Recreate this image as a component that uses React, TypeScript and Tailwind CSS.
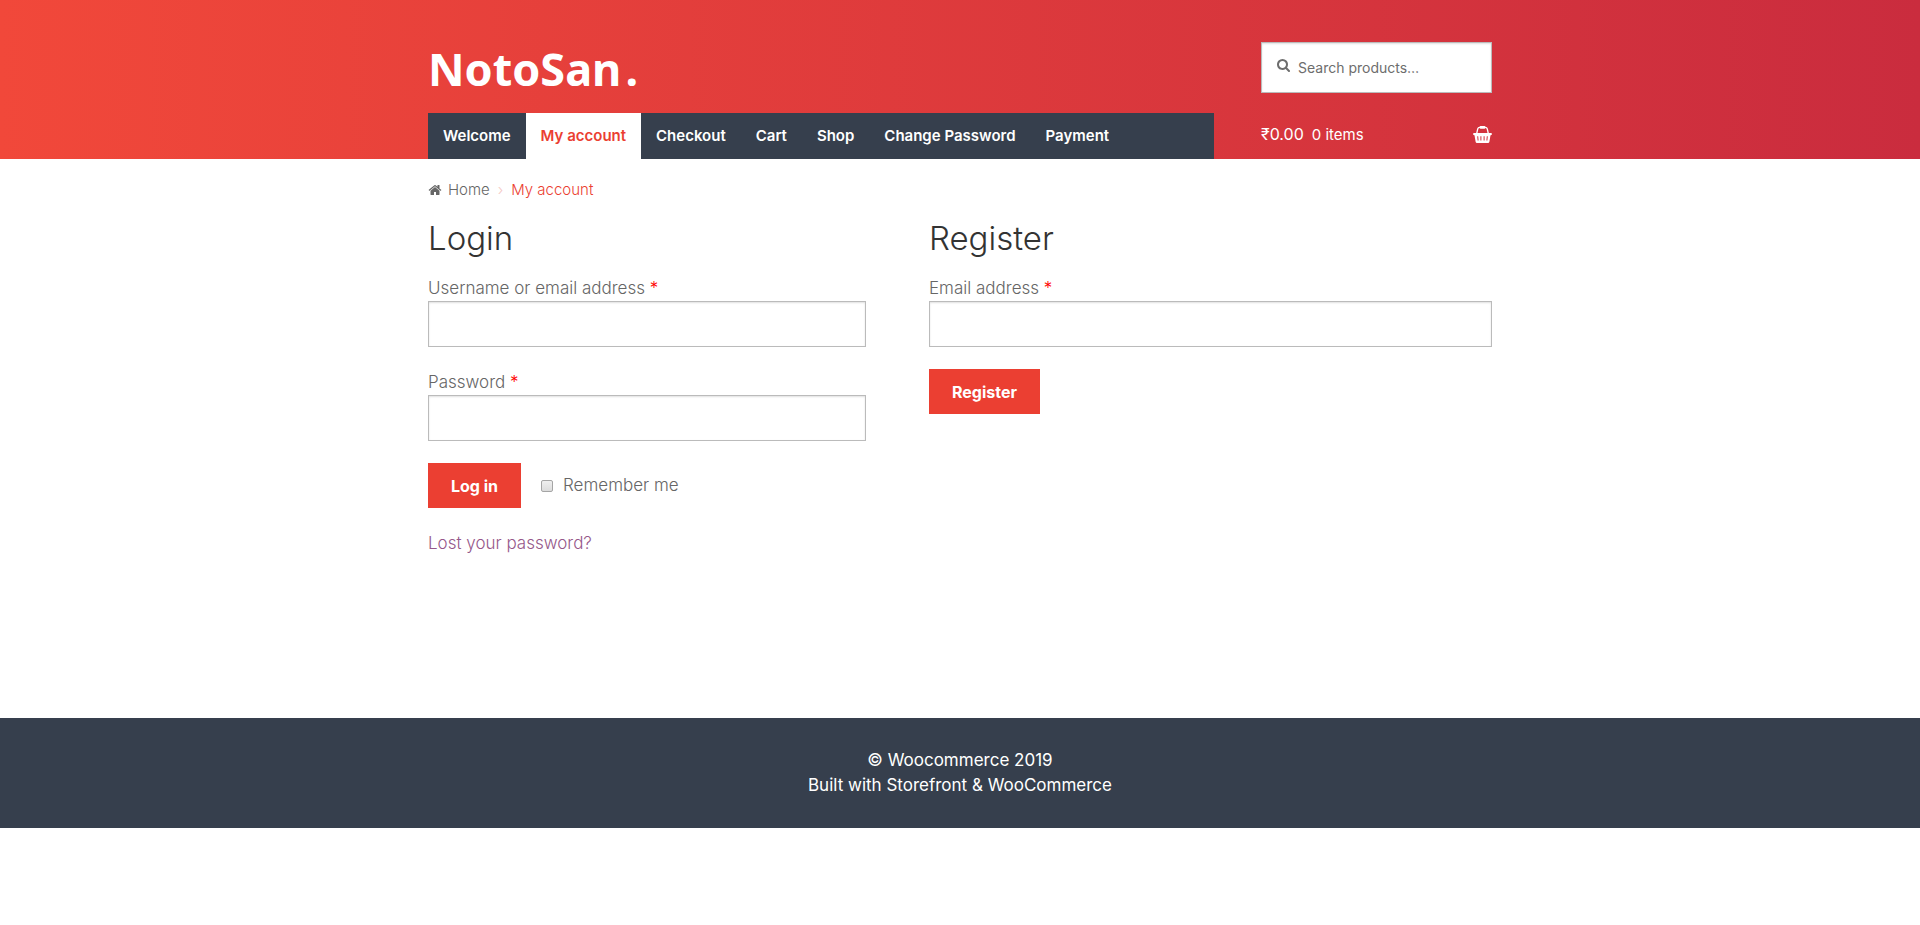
import React from "react";

const NAV = ["Welcome", "My account", "Checkout", "Cart", "Shop", "Change Password", "Payment"];

const INPUT =
  "block h-[46px] w-full border border-[#bbb] bg-white px-3 text-base text-[#43454b] shadow-[inset_0_1px_2px_rgba(0,0,0,0.125)] outline-none";
const BUTTON = "h-[45px] bg-[#eb3f32] px-[23px] text-base font-bold text-white";
const LABEL = "block leading-[26px]";
const HEADING = "mb-[17px] text-[33px] font-light leading-10 text-[#333]";

function HomeIcon() {
  return (
    <svg viewBox="0 0 1792 1792" fill="currentColor" aria-hidden="true" className="mr-[6px] size-[14px]">
      <path d="M1472 992v480q0 26-19 45t-45 19h-384v-384h-256v384h-384q-26 0-45-19t-19-45v-480q0-1 .5-3t.5-3l575-474 575 474q1 2 1 6zm223-69l-62 74q-8 9-21 11h-3q-13 0-21-7l-692-577-692 577q-12 8-24 7-13-2-21-11l-62-74q-8-10-7-23.5t11-21.5l719-599q32-26 76-26t76 26l244 204v-195q0-14 9-23t23-9h192q14 0 23 9t9 23v408l219 182q10 8 11 21.5t-7 23.5z" />
    </svg>
  );
}

function SearchIcon() {
  return (
    <svg viewBox="64 128 1664 1664" fill="currentColor" aria-hidden="true" className="mb-1 size-[13px] shrink-0 text-[#6d6d6d]">
      <path d="M1216 832q0-185-131.5-316.5t-316.5-131.5-316.5 131.5-131.5 316.5 131.5 316.5 316.5 131.5 316.5-131.5 131.5-316.5zm512 832q0 52-38 90t-90 38q-54 0-90-38l-343-342q-179 124-399 124-143 0-273.5-55.5t-225-150-150-225-55.5-273.5 55.5-273.5 150-225 225-150 273.5-55.5 273.5 55.5 225 150 150 225 55.5 273.5q0 220-124 399l343 343q37 37 37 90z" />
    </svg>
  );
}

function BasketIcon() {
  return (
    <svg viewBox="0 0 19 17" aria-hidden="true" className="h-[17px] w-[19px]">
      <path d="M3.6 8 4.7 3q.4-1.6 2-1.6h5.6q1.6 0 2 1.6l1.1 5" fill="none" stroke="currentColor" strokeWidth="1.3" />
      <rect x="6.6" y="0" width="5.8" height="2.8" rx="1" fill="currentColor" />
      <path
        fill="currentColor"
        fillRule="evenodd"
        d="M1.2 7h16.6q1.2 0 1.2 1.1t-1.2 1.2h-.3l-1.1 6.5q-.2 1.2-1.4 1.2H4q-1.2 0-1.4-1.2L1.5 9.300h-.3Q0 9.200 0 8.100T1.200 7zM4.200 10.200l.4 4.300h1l-.4-4.300zM7.400 10.200v4.300h1v-4.300zM10.600 10.200v4.300h1v-4.300zM13.800 10.200l-.4 4.300h1l.4-4.300z"
      />
    </svg>
  );
}

function Header() {
  return (
    <header className="bg-[linear-gradient(to_right,#f1483a,#ca2c3e)] px-6">
      <div className="mx-auto flex max-w-[1064px] justify-between">
        <div className="flex w-[786px] flex-col">
          <a href="#" className="flex h-[113px] items-center gap-1 pt-6 font-['Noto_Sans',sans-serif] text-[45px] font-bold text-white">
            <span>NotoSan</span>
            <span>.</span>
          </a>
          <nav aria-label="Primary" className="flex h-[46px] bg-[#363f4d] text-[15px] font-semibold">
            {NAV.map((item) => (
              <a
                key={item}
                href="#"
                className={
                  item === "My account"
                    ? "flex items-center bg-white px-[15px] text-[#eb3f32]"
                    : "flex items-center px-[15px] text-white"
                }
              >
                {item}
              </a>
            ))}
          </nav>
        </div>
        <div className="flex w-[231px] flex-col pt-[42px]">
          <form className="flex h-[51px] items-center gap-2 border border-[#bbb] bg-white px-[15px] shadow-[inset_0_1px_2px_rgba(0,0,0,0.125)]">
            <SearchIcon />
            <input
              type="search"
              aria-label="Search products"
              placeholder="Search products…"
              className="w-full min-w-0 bg-transparent text-sm text-[#43454b] outline-none placeholder:text-[#6d6d6d]"
            />
          </form>
          <a href="#" className="flex h-[66px] items-center justify-between pt-4 text-white">
            <span className="flex items-baseline gap-2">
              <span className="text-base">₹0.00</span>
              <span className="text-[15px]">0 items</span>
            </span>
            <BasketIcon />
          </a>
        </div>
      </div>
    </header>
  );
}

function Required() {
  return <span className="text-[#ff0000]">*</span>;
}

export default function App() {
  return (
    <div className="bg-white font-[Inter,sans-serif] text-[17px] text-[#666]">
      <Header />
      <div className="px-6">
        <div className="mx-auto max-w-[1064px]">
          <nav aria-label="Breadcrumb" className="flex items-center pt-[19px] text-[15px] leading-6 font-light">
            <HomeIcon />
            <a href="#">Home</a>
            <span className="mx-2 text-[#f5c9c5]">›</span>
            <span className="text-[#eb3f32]">My account</span>
          </nav>
          <main className="flex min-h-[516px] gap-[63px] pt-4 font-light">
            <section className="w-[438px]">
              <h2 className={HEADING}>Login</h2>
              <form className="flex flex-col gap-[22px]">
                <div>
                  <label htmlFor="username" className={LABEL}>
                    Username or email address <Required />
                  </label>
                  <input id="username" type="text" className={INPUT} />
                </div>
                <div>
                  <label htmlFor="password" className={LABEL}>
                    Password <Required />
                  </label>
                  <input id="password" type="password" className={INPUT} />
                </div>
                <div className="flex items-center gap-5">
                  <button type="button" className={BUTTON}>Log in</button>
                  <label className="flex items-center gap-[10px]">
                    <input
                      type="checkbox"
                      className="size-3 appearance-none rounded-[2px] border border-[#a5a5a5] bg-linear-to-b from-[#efefef] to-[#dcdcdc] checked:from-[#363f4d] checked:to-[#363f4d]"
                    />
                    Remember me
                  </label>
                </div>
                <a href="#" className="leading-[26px] text-[#96588a]">Lost your password?</a>
              </form>
            </section>
            <section className="flex-1">
              <h2 className={HEADING}>Register</h2>
              <form className="flex flex-col items-start gap-[22px]">
                <div className="w-full">
                  <label htmlFor="email" className={LABEL}>
                    Email address <Required />
                  </label>
                  <input id="email" type="email" className={INPUT} />
                </div>
                <button type="button" className={BUTTON}>Register</button>
              </form>
            </section>
          </main>
        </div>
      </div>
      <footer className="bg-[#363f4d] px-6 py-[30px] text-center leading-[25px] text-white">
        <p>© Woocommerce 2019</p>
        <p>Built with Storefront &amp; WooCommerce</p>
      </footer>
    </div>
  );
}
